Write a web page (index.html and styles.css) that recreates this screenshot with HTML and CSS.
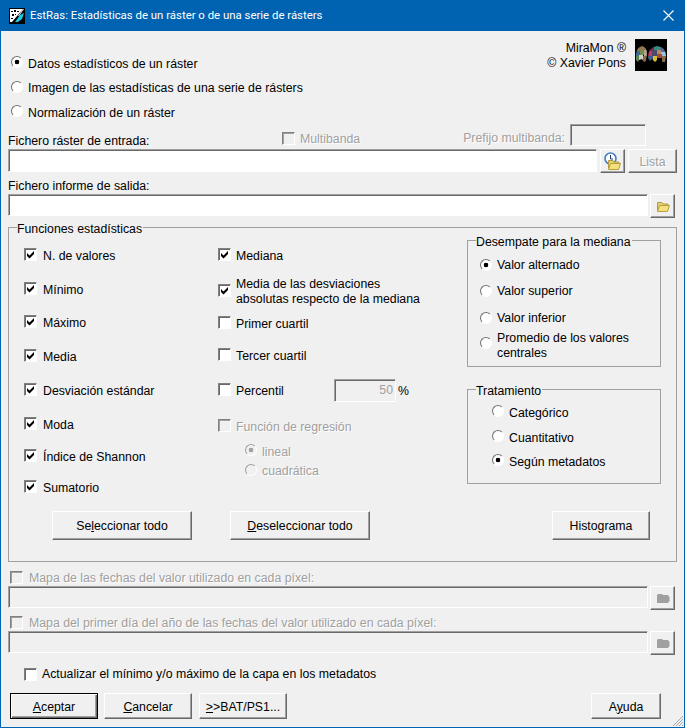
FILE: index.html
```html
<!DOCTYPE html>
<html lang="es">
<head>
<meta charset="utf-8">
<title>EstRas</title>
<link rel="stylesheet" href="styles.css">
</head>
<body>
<svg class="defs" width="0" height="0" aria-hidden="true">
  <symbol id="tick" viewBox="0 0 9 9"><path d="M1 3 L3.5 5.5 L8 1 V4 L3.5 8.5 L1 6 Z" fill="#000"/></symbol>
  <symbol id="folder" viewBox="0 0 14 11"><path d="M1.5 9.5 V1.5 H6 L7 3 H12 V4.5" fill="#e8d070" stroke="#b09a3c"/><path d="M1.5 10.5 L3.5 4.5 H13.5 L11.5 10.5 Z" fill="#f4e07c" stroke="#b59f3e"/></symbol>
  <symbol id="folder-off" viewBox="0 0 14 11"><path d="M1 2 L2 1 H6 L7 2 H12 L13.5 4 V8 L12 10 H1 Z" fill="#a0a0a0"/></symbol>
</svg>
<div class="window">
  <header class="titlebar">
    <svg class="app-icon" viewBox="0 0 16 16" width="16" height="16">
      <rect width="16" height="16" fill="#000"/>
      <path d="M1 1 H14 L3 14 H1 Z" fill="#fff"/>
      <path d="M2 3 h2 v1 h-2 z M5 2 h2 v2 h-2 z M8 3 h2 v1 h-2 z M3 6 h2 v2 h-2 z M6 6 h1 v1 h-1 z M2 10 h2 v1 h-2 z" fill="#000"/>
      <path d="M6 14 L11 7 L15 5 L13 11 L9 14 Z" fill="#1ec8e0"/>
      <path d="M14 1 L15 1 L10 8 L9 8 Z" fill="#fff"/>
    </svg>
    <span class="title-text">EstRas: Estadísticas de un ráster o de una serie de rásters</span>
    <svg class="close" viewBox="0 0 11 11" width="11" height="11"><path d="M0.5 0.5 L10.5 10.5 M10.5 0.5 L0.5 10.5" stroke="#fff" stroke-width="1.1" fill="none"/></svg>
  </header>

  <main class="content">
    <section class="top">
      <div class="mode-list">
        <label class="opt mode"><span class="radio on"></span>Datos estadísticos de un ráster</label>
        <label class="opt mode"><span class="radio"></span>Imagen de las estadísticas de una serie de rásters</label>
        <label class="opt mode"><span class="radio"></span>Normalización de un ráster</label>
      </div>
      <div class="brand">
        <div class="brand-text">MiraMon ®<br>© Xavier Pons</div>
        <svg class="logo" viewBox="0 0 32 32" width="32" height="32">
          <defs>
            <clipPath id="domes"><path d="M1 21 V15 Q2 8 7 7 Q12 8 12 15 L11 22 L9 23 L7 20 L4 21 L3 23 Z M13 19 Q13 8 22 7 Q31 8 31 17 L30 23 L27 23 L26 19 L22 21 L20 23 L17 20 L15 22 Z"/></clipPath>
          </defs>
          <rect width="32" height="32" fill="#000"/>
          <g clip-path="url(#domes)">
            <rect x="0" y="6" width="13" height="6" fill="#8d7a52"/>
            <rect x="0" y="12" width="5" height="5" fill="#3f6a8c"/>
            <rect x="5" y="12" width="4" height="4" fill="#6f8f4f"/>
            <rect x="9" y="11" width="4" height="6" fill="#b2a58c"/>
            <rect x="0" y="17" width="4" height="7" fill="#5c7f55"/>
            <rect x="4" y="16" width="4" height="6" fill="#cfcfc4"/>
            <rect x="8" y="17" width="5" height="6" fill="#86684a"/>
            <rect x="13" y="6" width="6" height="6" fill="#7a2a4e"/>
            <rect x="19" y="6" width="6" height="5" fill="#2f8f7a"/>
            <rect x="25" y="6" width="7" height="7" fill="#5c6a92"/>
            <rect x="13" y="12" width="4" height="5" fill="#c03a6c"/>
            <rect x="17" y="11" width="5" height="6" fill="#4a4a6a"/>
            <rect x="22" y="11" width="4" height="4" fill="#b78a6a"/>
            <rect x="26" y="13" width="6" height="4" fill="#9cc4dc"/>
            <rect x="13" y="17" width="5" height="6" fill="#3e5f8a"/>
            <rect x="18" y="17" width="4" height="6" fill="#d8c030"/>
            <rect x="22" y="15" width="5" height="4" fill="#a04a3c"/>
            <rect x="27" y="17" width="5" height="6" fill="#8a6a4c"/>
          </g>
        </svg>
      </div>
    </section>

    <section class="source-labels">
      <label class="label-main">Fichero ráster de entrada:</label>
      <label class="opt multiband off"><span class="check off"></span>Multibanda</label>
      <label class="prefix off">Prefijo multibanda:</label>
      <input class="field prefix-field" type="text" disabled>
    </section>
    <section class="file-row">
      <input class="field source-field" type="text">
      <button class="btn icon-btn" type="button">
        <svg viewBox="0 0 17 18" width="17" height="18">
          <circle cx="6.5" cy="6.5" r="5.5" fill="#fff" stroke="#3f7fc4" stroke-width="1.6"/>
          <path d="M6.5 3 V7 H9" stroke="#1d3a66" fill="none"/>
          <use href="#folder" x="3" y="7" width="14" height="11"/>
        </svg>
      </button>
      <button class="btn list-btn off" type="button">Lista</button>
    </section>
    <label class="label-output">Fichero informe de salida:</label>
    <section class="file-row short">
      <input class="field wide-field" type="text">
      <button class="btn icon-btn" type="button"><svg width="14" height="11"><use href="#folder"/></svg></button>
    </section>

    <section class="group stats">
      <span class="legend">Funciones estadísticas</span>
      <div class="stats-cols">
        <div class="col col-a">
          <label class="opt fn"><span class="check"><svg><use href="#tick"/></svg></span>N. de valores</label>
          <label class="opt fn m14"><span class="check"><svg><use href="#tick"/></svg></span>Mínimo</label>
          <label class="opt fn m13"><span class="check"><svg><use href="#tick"/></svg></span>Máximo</label>
          <label class="opt fn m14"><span class="check"><svg><use href="#tick"/></svg></span>Media</label>
          <label class="opt fn m14"><span class="check"><svg><use href="#tick"/></svg></span>Desviación estándar</label>
          <label class="opt fn m14"><span class="check"><svg><use href="#tick"/></svg></span>Moda</label>
          <label class="opt fn m12"><span class="check"><svg><use href="#tick"/></svg></span>Índice de Shannon</label>
          <label class="opt fn m11"><span class="check"><svg><use href="#tick"/></svg></span>Sumatorio</label>
        </div>
        <div class="col col-b">
          <label class="opt fn"><span class="check"><svg><use href="#tick"/></svg></span>Mediana</label>
          <label class="opt fn two m11"><span class="check"><svg><use href="#tick"/></svg></span><span>Media de las desviaciones<br>absolutas respecto de la mediana</span></label>
          <label class="opt fn m7"><span class="check"></span>Primer cuartil</label>
          <label class="opt fn m12"><span class="check"></span>Tercer cuartil</label>
          <div class="opt fn m15 percent">
            <span class="check"></span><span class="percent-name">Percentil</span>
            <input class="field percent-field" type="text" value="50" disabled>
            <span class="percent-sign">%</span>
          </div>
          <label class="opt fn m16 off"><span class="check off"></span>Función de regresión</label>
          <label class="opt fn sub m5 off"><span class="radio off on"></span>lineal</label>
          <label class="opt fn sub last off"><span class="radio off"></span>cuadrática</label>
        </div>
        <div class="col col-c">
          <div class="group tie">
            <span class="legend">Desempate para la mediana</span>
            <label class="opt fn"><span class="radio on"></span>Valor alternado</label>
            <label class="opt fn m6"><span class="radio"></span>Valor superior</label>
            <label class="opt fn m7"><span class="radio"></span>Valor inferior</label>
            <label class="opt fn two m3"><span class="radio"></span><span>Promedio de los valores<br>centrales</span></label>
          </div>
          <div class="group treat">
            <span class="legend">Tratamiento</span>
            <label class="opt fn"><span class="radio"></span>Categórico</label>
            <label class="opt fn m5"><span class="radio"></span>Cuantitativo</label>
            <label class="opt fn m4"><span class="radio on"></span>Según metadatos</label>
          </div>
        </div>
      </div>
      <div class="stats-actions">
        <button class="btn action" type="button">Se<u>l</u>eccionar todo</button>
        <button class="btn action" type="button"><u>D</u>eseleccionar todo</button>
        <button class="btn action histo" type="button">Histograma</button>
      </div>
    </section>

    <label class="opt date-label off first"><span class="check off"></span>Mapa de las fechas del valor utilizado en cada píxel:</label>
    <section class="file-row short">
      <input class="field wide-field" type="text" disabled>
      <button class="btn icon-btn" type="button"><svg width="14" height="11"><use href="#folder-off"/></svg></button>
    </section>
    <label class="opt date-label off"><span class="check off"></span>Mapa del primer día del año de las fechas del valor utilizado en cada píxel:</label>
    <section class="file-row short">
      <input class="field wide-field" type="text" disabled>
      <button class="btn icon-btn" type="button"><svg width="14" height="11"><use href="#folder-off"/></svg></button>
    </section>

    <label class="opt update"><span class="check"></span>Actualizar el mínimo y/o máximo de la capa en los metadatos</label>

    <footer class="footer">
      <button class="btn foot default" type="button"><u>A</u>ceptar</button>
      <button class="btn foot" type="button"><u>C</u>ancelar</button>
      <button class="btn foot" type="button"><u>&gt;</u>&gt;BAT/PS1...</button>
      <button class="btn foot help" type="button">A<u>y</u>uda</button>
    </footer>
  </main>
  <svg class="grip" viewBox="0 0 12 12" width="12" height="12"><path d="M11 1 L1 11 M11 4 L4 11 M11 7 L7 11 M11 10 L10 11" stroke="#a8a8a8" stroke-width="1" fill="none"/></svg>
</div>
</body>
</html>
```
FILE: styles.css
```css
* { box-sizing: border-box; }
html, body { margin: 0; padding: 0; }
body {
  font-family: "Liberation Sans", Arial, sans-serif;
  font-size: 12.3px;
  line-height: 15px;
  color: #000;
  background: #f0f0f0;
}
.defs { position: absolute; }
.window {
  position: relative;
  width: 685px;
  height: 728px;
  border: 1px solid #0063b1;
  border-top: 0;
  background: #f0f0f0;
  overflow: hidden;
}
.titlebar {
  display: flex;
  align-items: center;
  height: 31px;
  margin: 0 -1px;
  padding: 0 11px 0 9px;
  background: #0063b1;
  color: #fff;
  font-family: Roboto, sans-serif;
  font-size: 11.4px;
}
.app-icon { flex: none; }
.title-text { margin-left: 5px; flex: 1; }
.close { flex: none; }
.content { padding: 0 7px; }

.opt { display: flex; align-items: center; padding-top: 2px; }
.off { color: #a0a0a0; text-shadow: 1px 1px 0 #fff; }

.check {
  flex: none;
  display: block;
  position: relative;
  width: 13px;
  height: 13px;
  margin-right: 6px;
  margin-top: -3px;
  background: #fff;
  border: 1px solid;
  border-color: #808080 #fff #fff #808080;
  box-shadow: inset 1px 1px 0 #696969;
}
.check.off { background: #f0f0f0; box-shadow: inset 1px 1px 0 #a0a0a0; }
.check svg { display: block; width: 9px; height: 9px; margin: 1px 0 0 1px; }

.radio {
  flex: none;
  display: block;
  width: 12px;
  height: 12px;
  margin-right: 5px;
  margin-top: -4px;
  border-radius: 50%;
  background: #fff;
  border: 1px solid;
  border-color: #707070 #fff #fff #707070;
}
.radio.on { background: radial-gradient(circle, #000 0 2px, #fff 2.6px); }
.radio.off { background: #f0f0f0; border-color: #a0a0a0 #fff #fff #a0a0a0; }
.radio.off.on { background: radial-gradient(circle, #a0a0a0 0 2px, #f0f0f0 2.6px); }

.top { display: flex; justify-content: space-between; height: 93px; }
.mode-list { padding: 20px 0 0 3px; }
.mode { height: 24.5px; }
.brand { display: flex; align-items: center; height: 32px; margin: 8px 10px 0 0; gap: 9px; }
.brand-text { text-align: right; padding-top: 2px; }
.logo { display: block; }

.field {
  display: block;
  font: inherit;
  background: #fff;
  border: 1px solid;
  border-color: #a0a0a0 #fff #fff #a0a0a0;
  box-shadow: inset 1px 1px 0 #696969;
  padding: 0 2px;
  border-radius: 0;
  outline: 0;
}
.field:disabled { background: #f0f0f0; color: #a0a0a0; }

.btn {
  display: block;
  padding: 2px 0 0;
  font: inherit;
  color: #000;
  background: #f0f0f0;
  border: 1px solid;
  border-color: #fff #696969 #696969 #fff;
  box-shadow: inset -1px -1px 0 #a0a0a0;
  border-radius: 0;
}
.btn.off { color: #a0a0a0; }

.source-labels { display: flex; align-items: flex-start; height: 25px; }
.label-main { width: 274px; padding-top: 10px; }
.multiband { padding-top: 8px; }
.multiband .check { margin-top: -2px; margin-right: 5px; }
.prefix { margin-left: auto; padding-top: 7px; }
.prefix-field { width: 76px; height: 22px; margin: 0 31px 0 5px; }

.file-row { display: flex; align-items: flex-start; height: 24px; }
.file-row.short { height: 23px; }
.source-field { width: 589px; height: 23px; margin-right: 3px; }
.wide-field { width: 640px; height: 22px; margin-right: 2px; }
.icon-btn { display: flex; align-items: center; justify-content: center; width: 25px; height: 24px; padding: 0; flex: none; }
.list-btn { width: 49px; height: 24px; margin-left: 3px; }
.label-output { display: block; height: 21px; padding-top: 6px; }

.group { position: relative; border: 1px solid #a0a0a0; }
.legend {
  position: absolute;
  left: 8px;
  top: -6px;
  padding: 0 1px 0 0;
  background: #f0f0f0;
}
.stats { height: 335px; margin-top: 10px; }
.stats-cols { display: flex; padding: 12px 0 0 15px; height: 283px; }
.col-a { width: 194px; padding-top: 5px; }
.col-b { width: 249px; padding-top: 5px; }
.col-c { width: 194px; }
.fn { height: 20px; }
.fn.two { height: 30px; }
.m3 { margin-top: 3px; }
.m4 { margin-top: 4px; }
.m5 { margin-top: 5px; }
.m6 { margin-top: 6px; }
.m7 { margin-top: 7px; }
.m11 { margin-top: 11px; }
.m12 { margin-top: 12px; }
.m13 { margin-top: 13px; }
.m14 { margin-top: 14px; }
.m15 { margin-top: 15px; }
.m16 { margin-top: 16px; }
.col-b .check { margin-right: 5px; }
.sub { padding-left: 27px; }
.sub.last { height: 19px; margin-top: 0; }
.percent-name { width: 98px; }
.percent-field { width: 62px; height: 23px; margin-top: -2px; text-align: right; }
.percent-sign { margin-left: 2px; }

.tie { height: 127px; padding: 13px 0 0 12px; }
.tie .radio { margin-top: 0; }
.tie .two .radio { margin-top: -6px; }
.treat { height: 95px; margin-top: 22px; padding: 12px 0 0 24px; }

.stats-actions { display: flex; padding-left: 43px; }
.action { width: 140px; height: 29px; margin-right: 38px; }
.action.histo { width: 98px; margin: 0 0 0 144px; }

.date-label { height: 24px; padding: 8px 0 0 2px; }
.date-label .check { margin-right: 6px; margin-top: -1px; }
.date-label:not(.first) { height: 22px; padding-top: 6px; }

.update { height: 20px; margin-top: 9px; padding-left: 16px; }
.update .check { margin-right: 5px; margin-top: 1px; }

.footer { display: flex; margin-top: 10px; padding-left: 2px; }
.foot { width: 88px; height: 26px; margin-right: 7px; }
.foot.default { border: 1px solid #000; box-shadow: inset 1px 1px 0 #fff, inset -1px -1px 0 #696969, inset -2px -2px 0 #a0a0a0; margin-right: 6px; }
.foot.help { width: 70px; margin: 0 16px 0 auto; }

.grip { position: absolute; right: 0; bottom: 0; }
```
